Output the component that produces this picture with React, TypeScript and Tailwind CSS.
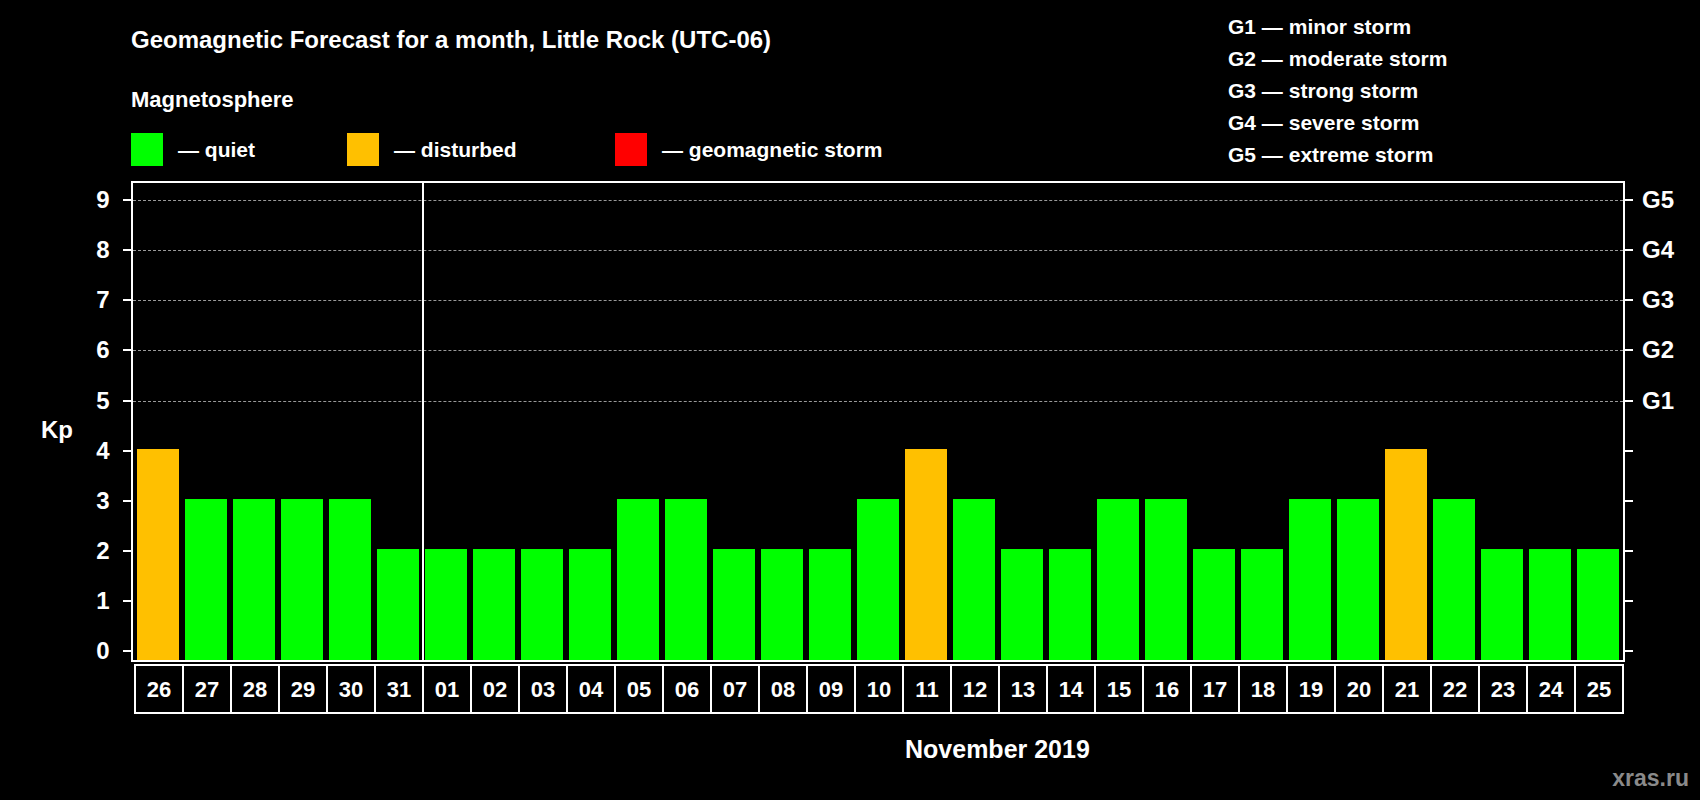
import * as React from 'react';

const kp = [4, 3, 3, 3, 3, 2, 2, 2, 2, 2, 3, 3, 2, 2, 2, 3, 4, 3, 2, 2, 3, 3, 2, 2, 3, 3, 4, 3, 2, 2, 2];
const days = ['26', '27', '28', '29', '30', '31', '01', '02', '03', '04', '05', '06', '07', '08', '09', '10', '11', '12', '13', '14', '15', '16', '17', '18', '19', '20', '21', '22', '23', '24', '25'];
const gLevels = ['minor', 'moderate', 'strong', 'severe', 'extreme'];

// value v -> offset from plot top (frame top = 181, level 0 at 651)
const yOf = (v: number) => 468 - 50.1 * v;

export default function App() {
    return (
        <div className="w-[1700px] h-[800px] bg-black text-white font-bold overflow-hidden" style={{ fontFamily: '"Liberation Sans", Arial, sans-serif' }}>
            {/* Шапка */}
            <div className="flex h-[181px]">
                <div className="w-[1228px] pl-[131px]">
                    <div className="pt-[26px] text-[24px] leading-[28px]">Geomagnetic Forecast for a month, Little Rock (UTC-06)</div>
                    <div className="pt-[33px] text-[22px] leading-[26px]">Magnetosphere</div>
                    <div className="flex items-center pt-[20px] text-[21px]">
                        <div className="w-[32px] h-[33px] bg-[#00ff00]" />
                        <span className="ml-[15px] w-[169px]">— quiet</span>
                        <div className="w-[32px] h-[33px] bg-[#ffc000]" />
                        <span className="ml-[15px] w-[221px]">— disturbed</span>
                        <div className="w-[32px] h-[33px] bg-[#ff0000]" />
                        <span className="ml-[15px]">— geomagnetic storm</span>
                    </div>
                </div>
                <div className="pt-[11px] text-[21px] leading-[32px]">
                    {gLevels.map((g, i) => (
                        <div key={g}>G{i + 1} — {g} storm</div>
                    ))}
                </div>
            </div>

            {/* График */}
            <div className="pl-[131px]">
                <div className="relative w-[1494px] h-[481px] border-2 border-white">
                    {Array.from({ length: 10 }, (_, v) => (
                        <React.Fragment key={v}>
                            <div className="absolute left-[-10px] w-[8px] h-[2px] bg-white" style={{ top: yOf(v) - 1 }} />
                            <div className="absolute right-[-10px] w-[8px] h-[2px] bg-white" style={{ top: yOf(v) - 1 }} />
                            <div className="absolute left-[-42px] w-[24px] text-center text-[24px] leading-[28px]" style={{ top: yOf(v) - 14 }}>{v}</div>
                            {v >= 5 && (
                                <>
                                    <div className="absolute left-0 right-0 border-t border-dashed border-[#9a9a9a]" style={{ top: yOf(v) }} />
                                    <div className="absolute right-[-60px] w-[50px] text-[24px] leading-[28px] text-center" style={{ top: yOf(v) - 14 }}>G{v - 4}</div>
                                </>
                            )}
                        </React.Fragment>
                    ))}
                    <div className="absolute left-[-92px] top-[233px] text-[24px] leading-[28px]">Kp</div>
                    <div className="absolute top-0 bottom-0 left-[289px] w-[2px] bg-white" />
                    <div className="flex items-end h-full pl-[4px] gap-[6px]">
                        {kp.map((v, i) => (
                            <div key={i} className={v >= 4 ? 'w-[42px] bg-[#ffc000]' : 'w-[42px] bg-[#00ff00]'} style={{ height: 11 + 50.1 * v }} />
                        ))}
                    </div>
                </div>
                <div className="flex ml-[3px] mt-[2px] w-[1490px] border-2 border-white">
                    {days.map((d, i) => (
                        <div key={d} className={i === 0 ? 'flex-1 h-[46px] flex items-center justify-center text-[22px]' : 'flex-1 h-[46px] flex items-center justify-center text-[22px] border-l-2 border-white'}>{d}</div>
                    ))}
                </div>
            </div>

            <div className="flex items-start">
                <div className="w-[1700px] pl-[905px] pt-[20px] text-[25px] leading-[30px]">November 2019</div>
            </div>
            <div className="flex justify-end pr-[11px] -mt-[3px] text-[23px] text-[#8a8a8a]">xras.ru</div>
        </div>
    );
}
